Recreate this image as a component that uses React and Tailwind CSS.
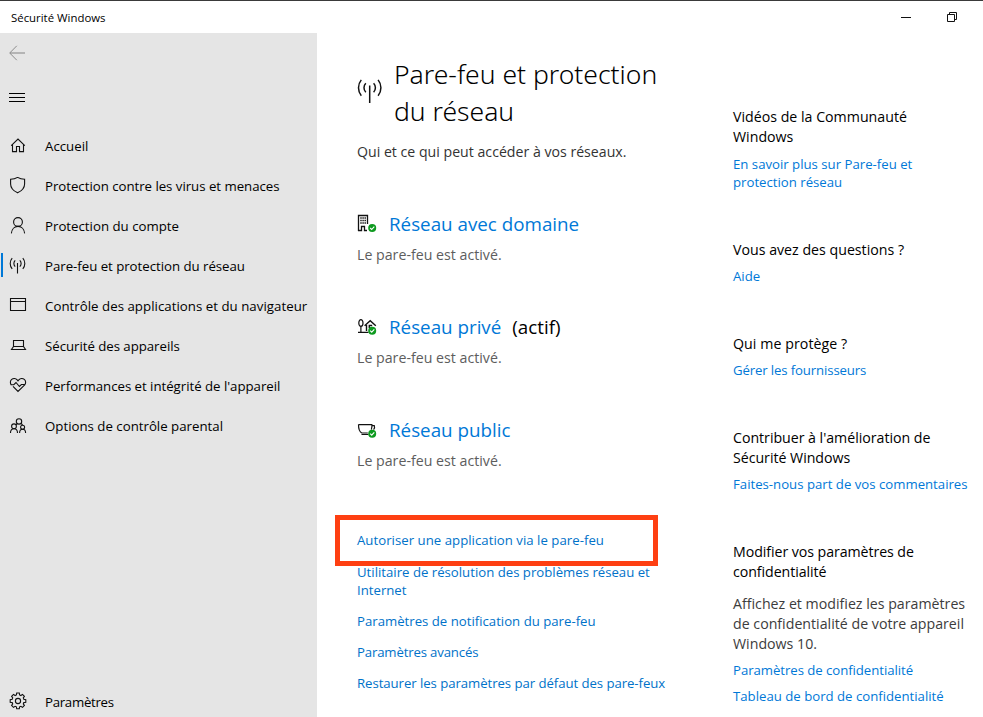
import React from 'react';

function Icon({ children, className = '' }) {
  return (
    <svg viewBox="0 0 18 18" width="18" height="18" fill="none" stroke="#111" strokeWidth="1.1" className={`shrink-0 ${className}`}>
      {children}
    </svg>
  );
}

const HomeIcon = () => (
  <Icon>
    <path d="M2.200 8.600 9 2.100l6.800 6.500M3.500 7.600v7H7.500V9.500h3v5.100h4v-7" />
  </Icon>
);

const ShieldIcon = () => (
  <Icon>
    <path d="M8.600.400C6.600 1.700 4.200 2.300 1.600 2.300V7c0 3.800 2.600 6.800 7 8.800 4.400-2 7-5 7-8.800V2.300C13 2.300 10.600 1.700 8.600.400z" />
  </Icon>
);

const PersonIcon = () => (
  <Icon>
    <circle cx="9" cy="5" r="4.400" />
    <path d="M2.400 16.400c.3-4.200 3.100-7 6.600-7s6.300 2.800 6.600 7" />
  </Icon>
);

const AntennaIcon = () => (
  <Icon>
    <path d="M8.500 6v10.500M6.200 3.400a4.300 4.300 0 0 0 0 6.200M10.800 3.400a4.300 4.300 0 0 1 0 6.200M3.200 1.200a8 8 0 0 0 0 10.600M13.800 1.200a8 8 0 0 1 0 10.600" />
  </Icon>
);

const WindowIcon = () => (
  <Icon>
    <path d="M1.500 1.500h15v12h-15zM1.500 4.500h15" />
  </Icon>
);

const LaptopIcon = () => (
  <Icon>
    <path d="M4.500 10V3.500h10V10M4.500 9.500h10l2 3h-14z" />
  </Icon>
);

const HeartIcon = () => (
  <Icon>
    <path d="M2.300 8C.9 6.300 1.100 3.700 2.700 2.400c1.600-1.300 4.100-1 5.500.5L9 3.800l.8-.9c1.400-1.500 3.900-1.800 5.500-.5 1.600 1.300 1.800 3.900.4 5.600L9 14.500 4 9.400" />
    <path d="M1.800 7.700h3L7 5.500l3.400 4 2-2h3.500" />
  </Icon>
);

const FamilyIcon = () => (
  <Icon>
    <circle cx="10" cy="4.400" r="2.700" />
    <circle cx="5" cy="9.300" r="2.400" />
    <circle cx="13.600" cy="10.300" r="2" />
    <path d="M1.500 16c0-2.600 1.500-4.300 3.500-4.300S8.500 13.400 8.500 16M10.600 16c0-2.200 1.200-3.700 3-3.700s3 1.500 3 3.700M8.300 6.500 7.200 8M11.800 6.500c.9.400 1.400.9 1.700 1.700" />
  </Icon>
);

const GearIcon = () => (
  <Icon className="-mt-[2px]">
    <path d="M7.700 1h2.600l.3 1.900 1.300.6 1.600-1.100 1.900 1.900-1.100 1.600.5 1.300 2 .4v2.600l-2 .4-.5 1.300 1.100 1.600-1.900 1.900-1.600-1.100-1.300.5-.3 2H7.700l-.3-2-1.300-.5-1.600 1.100-1.900-1.900 1.100-1.600-.5-1.300-2-.4V7.600l2-.4.5-1.300-1.100-1.600 1.900-1.900 1.600 1.100 1.300-.6z" />
    <circle cx="9" cy="9" r="2.600" />
  </Icon>
);

function StatusIcon({ children, cy }) {
  return (
    <svg viewBox="0 0 20 20" width="20" height="20" className="shrink-0" fill="none" stroke="#111" strokeWidth="1.200">
      {children}
      <circle cx="15.200" cy={cy} r="4" fill="#0e9a1f" stroke="none" />
      <path d={`M13.200 ${cy}l1.500 1.500 2.600-2.900`} stroke="#fff" strokeWidth="1.100" />
    </svg>
  );
}

const DomainIcon = () => (
  <StatusIcon cy={14}>
    <path d="M1.500 17V1.500h9V10M1 16.500h3.500v-4h3v4H10" strokeWidth="1.300" />
    <path d="M3.300 4h1.400M5.400 4h1.400M7.500 4h1.400M3.300 6.500h1.400M5.400 6.500h1.400M7.500 6.500h1.400M3.300 9h1.400M5.400 9h1.400M7.500 9h1.400" strokeWidth="1.300" />
  </StatusIcon>
);

const PrivateIcon = () => (
  <StatusIcon cy={13.7}>
    <ellipse cx="3.900" cy="6" rx="2.100" ry="3.400" />
    <path d="M3.900 9.400v6M1 15.300h10.500" />
    <path d="M7.600 8.800l5.600-5L18.800 8.800M9.500 8v6M12.300 11V8.500h2.900" strokeWidth="1.400" />
  </StatusIcon>
);

const PublicIcon = () => (
  <StatusIcon cy={13.7}>
    <path d="M1.500 4.600h13.800M1.500 4.600c0 4 .8 7.400 3.300 8.400h6M15 4.600c0 2-.2 3.700-.7 5M15.500 5.600h1.800c.6 1.500.2 3-.7 4M4.500 14.500h7" />
  </StatusIcon>
);

const NAV = [
  [HomeIcon, 'Accueil', ''],
  [ShieldIcon, 'Protection contre les virus et menaces', 'tracking-[-0.03px]'],
  [PersonIcon, 'Protection du compte', ''],
  [AntennaIcon, 'Pare-feu et protection du réseau', 'tracking-[-0.03px]'],
  [WindowIcon, 'Contrôle des applications et du navigateur', 'tracking-[0.03px]'],
  [LaptopIcon, 'Sécurité des appareils', 'tracking-[-0.04px]'],
  [HeartIcon, "Performances et intégrité de l'appareil", 'tracking-[-0.03px]'],
  [FamilyIcon, 'Options de contrôle parental', ''],
];

function NavItem({ icon: I, label, active, extra = '' }) {
  return (
    <a className="relative flex h-10 shrink-0 items-center pl-[9px]">
      {active && <span className="absolute top-[7px] left-[1px] h-6 w-[2px] bg-[#0078d7]" />}
      <I />
      <span className={`pl-[18px] text-[13.25px] leading-10 whitespace-nowrap text-black ${extra}`}>{label}</span>
    </a>
  );
}

function Network({ icon: I, name, note }) {
  return (
    <section className="h-[103px]">
      <div className="flex h-7 items-center text-[18.8px] leading-7">
        <I />
        <a className="pl-3 text-[#0078d7]">{name}</a>
        {note && <span className="pl-[11px] text-black">{note}</span>}
      </div>
      <p className="mt-[7px] text-[14.2px] leading-5 text-[#5d5d5d]">Le pare-feu est activé.</p>
    </section>
  );
}

function SideBlock({ title, children, className = '' }) {
  return (
    <section className="flex flex-col">
      <h2 className={`text-[14.2px] leading-5 whitespace-pre-line text-black ${className}`}>{title}</h2>
      {children}
    </section>
  );
}

function SideLink({ children, className = 'mt-[7px]' }) {
  return <a className={`text-[13.2px] leading-[18px] whitespace-pre-line text-[#0078d7] ${className}`}>{children}</a>;
}

export default function App() {
  return (
    <div className="flex h-[717px] w-[983px] flex-col overflow-hidden border-t border-[#3a3a3a] bg-white font-['Open_Sans','Noto_Sans',sans-serif]">
      <header className="flex h-8 shrink-0 items-center justify-between pr-[25px] pl-[11px]">
        <span className="pt-px text-[11.4px] leading-[33px] text-black">Sécurité Windows</span>
        <div className="flex items-center gap-[35px]">
          <svg width="10" height="12" viewBox="0 0 10 12" stroke="#111" shapeRendering="crispEdges">
            <path d="M0 6.500h10" />
          </svg>
          <svg width="12" height="12" viewBox="0 0 12 12" fill="none" stroke="#111">
            <path d="M1.500 3.500h7v7h-7zM3.500 3.500v-2h7v7h-2" />
          </svg>
        </div>
      </header>

      <div className="flex min-h-0 flex-1">
        <aside className="flex w-[317px] shrink-0 flex-col bg-[#e5e5e5]">
          <div className="flex h-10 items-center pl-[9px]">
            <svg width="16" height="16" viewBox="0 0 16 16" fill="none">
              <path d="M1 8h15" stroke="#b4b4b4" strokeWidth="2" />
              <path d="M7.800.800.700 8l7.100 7.200" stroke="#8c8c8c" />
            </svg>
          </div>
          <div className="mt-1 flex h-10 items-center pl-[9px]">
            <svg width="16" height="10" viewBox="0 0 16 10" stroke="#000" shapeRendering="crispEdges">
              <path d="M0 1.500h16M0 5.500h16M0 9.500h16" />
            </svg>
          </div>
          <nav className="mt-[9px] flex flex-col">
            {NAV.map(([I, label, extra], i) => (
              <NavItem key={label} icon={I} label={label} extra={extra} active={i === 3} />
            ))}
          </nav>
          <div className="mt-auto -mb-[5px]">
            <NavItem icon={GearIcon} label="Paramètres" extra="tracking-[-0.3px]" />
          </div>
        </aside>

        <main className="w-[416px] shrink-0 pt-[23px] pl-10">
          <div className="flex">
            <svg width="26" height="26" viewBox="0 0 26 26" fill="none" stroke="#111" strokeWidth="1.500" className="mt-[23px] shrink-0">
              <path d="M12.700 6.500v17.500M8.800 4.300a6.500 6.500 0 0 0 0 9M16.600 4.300a6.500 6.500 0 0 1 0 9M4.300.900a12.500 12.500 0 0 0 0 15.800M21.100.900a12.500 12.500 0 0 1 0 15.800" />
            </svg>
            <h1 className="pl-[11px] font-['Noto_Sans'] text-[26.5px] leading-[37px] font-light text-black">
              Pare-feu et protection
              <br />
              du réseau
            </h1>
          </div>
          <p className="mt-3 text-[14.150px] leading-5 text-[#333]">Qui et ce qui peut accéder à vos réseaux.</p>

          <div className="mt-12">
            <Network icon={DomainIcon} name="Réseau avec domaine" />
            <Network icon={PrivateIcon} name="Réseau privé" note="(actif)" />
            <Network icon={PublicIcon} name="Réseau public" />
          </div>

          <div className="mt-[12px] flex flex-col gap-[13px] text-[13.2px] leading-[18px] whitespace-nowrap text-[#0072c9]">
            <a className="relative z-10 mb-px tracking-[0.03px]">
              Autoriser une application via le pare-feu
              <span className="absolute -top-[16.500px] -left-[22px] h-[51px] w-[323px] border-[5px] border-[#fe3f12]" />
            </a>
            <a>
              Utilitaire de résolution des problèmes réseau et
              <br />
              Internet
            </a>
            <a>Paramètres de notification du pare-feu</a>
            <a className="tracking-[-0.16px]">Paramètres avancés</a>
            <a className="tracking-[-0.06px]">Restaurer les paramètres par défaut des pare-feux</a>
          </div>
        </main>

        <aside className="flex flex-1 flex-col gap-[49px] pt-[74px] whitespace-nowrap">
          <SideBlock title={'Vidéos de la Communauté\nWindows'}>
            <SideLink className="mt-2">{'En savoir plus sur Pare-feu et\nprotection réseau'}</SideLink>
          </SideBlock>
          <SideBlock title="Vous avez des questions ?">
            <SideLink>Aide</SideLink>
          </SideBlock>
          <SideBlock title="Qui me protège ?" className="tracking-[0.06px]">
            <SideLink className="mt-[7px] tracking-[-0.13px]">Gérer les fournisseurs</SideLink>
          </SideBlock>
          <SideBlock title={"Contribuer à l'amélioration de\nSécurité Windows"} className="tracking-[-0.03px]">
            <SideLink>Faites-nous part de vos commentaires</SideLink>
          </SideBlock>
          <SideBlock title={'Modifier vos paramètres de\nconfidentialité'} className="tracking-[-0.07px]">
            <p className="mt-3 text-[14.2px] leading-5 whitespace-pre-line text-[#3c3c3c]">
              {'Affichez et modifiez les paramètres\nde confidentialité de votre appareil\nWindows 10.'}
            </p>
            <SideLink className="mt-[7px] tracking-[-0.05px]">Paramètres de confidentialité</SideLink>
            <SideLink className="mt-2">Tableau de bord de confidentialité</SideLink>
          </SideBlock>
        </aside>
      </div>
    </div>
  );
}
